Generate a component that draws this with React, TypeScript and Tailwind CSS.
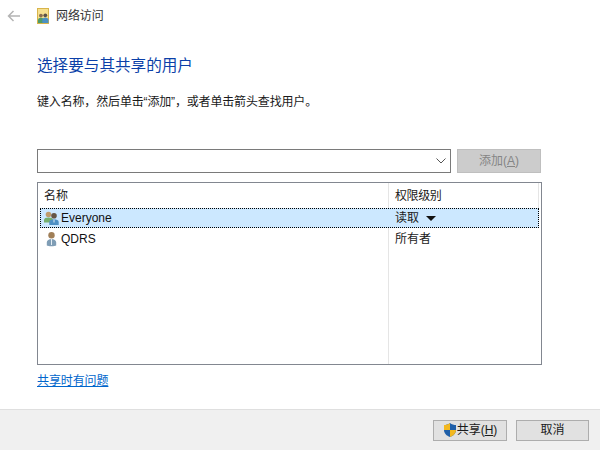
const font = { fontFamily: '"Liberation Sans", "Noto Sans CJK SC", sans-serif' };

function ShareIcon() {
  return (
    <svg width="12" height="16" viewBox="0 0 12 16" className="shrink-0">
      <rect x="0.5" y="0.5" width="11" height="15" fill="#f6e08f" stroke="#d8b44a" />
      <circle cx="3.900" cy="7.600" r="1.900" fill="#8a6d4f" />
      <path d="M1 15v-3c0-1.500 1.300-2.200 2.900-2.200S6.800 10.500 6.800 12v3z" fill="#4f9a68" />
      <circle cx="8.300" cy="7.300" r="1.900" fill="#5a5148" />
      <path d="M5.300 15v-3c0-1.500 1.300-2.400 3-2.400S11.500 10.500 11.500 12v3z" fill="#4b91c4" />
    </svg>
  );
}

function GroupIcon() {
  return (
    <svg width="17" height="16" viewBox="0 0 17 16" className="shrink-0">
      <circle cx="5.500" cy="4.500" r="2.800" fill="#c09c6c" />
      <path d="M1 12.500V10c0-1.900 2-2.600 4.500-2.600S10 8.100 10 10v2.500z" fill="#76b06e" />
      <circle cx="11" cy="5.800" r="2.800" fill="#655545" />
      <path d="M6.300 15v-3c0-2 2.100-2.800 4.700-2.800s4.700.8 4.700 2.800v3z" fill="#4d8fc4" />
      <path d="M11 9.500v3" stroke="#dbeaf5" />
    </svg>
  );
}

function UserIcon() {
  return (
    <svg width="13" height="16" viewBox="0 0 13 16" className="shrink-0">
      <circle cx="6.500" cy="4.200" r="3.200" fill="#a07f58" />
      <path d="M1.800 14.500v-3.300c0-2 2.200-3.300 4.700-3.300s4.700 1.300 4.700 3.300v3.300c-1.400.9-8 .9-9.400 0z" fill="#7f9db5" />
      <path d="M6.500 8v6" stroke="#e4edf3" />
    </svg>
  );
}

function Shield() {
  return (
    <svg width="14" height="16" viewBox="0 0 14 16" className="shrink-0">
      <path d="M7 1C5.200 2.400 3 3 1 3v5c0 3.300 2.600 5.800 6 7 3.400-1.200 6-3.700 6-7V3c-2 0-4.200-.6-6-2z" fill="#1f5fa8" />
      <path d="M7 1C5.200 2.400 3 3 1 3v5h6z" fill="#f3b81f" />
      <path d="M7 8v7c3.400-1.200 6-3.700 6-7z" fill="#f3b81f" />
    </svg>
  );
}

export default function App() {
  return (
    <div className="w-[600px] h-[450px] bg-white flex flex-col overflow-hidden text-[12px] text-[#1a1a1a]" style={font}>
      <div className="h-[31px] flex items-center shrink-0">
        <svg width="14" height="12" viewBox="0 0 14 12" className="ml-[7px] mr-[16px] shrink-0">
          <path d="M6.500 1 1.500 6l5 5M1.500 6H13" fill="none" stroke="#b4b4b4" strokeWidth="1.500" />
        </svg>
        <ShareIcon />
        <span className="ml-[7px] leading-[16px] text-[#333] tracking-[-0.1px]">网络访问</span>
      </div>

      <div className="flex-1 pl-[37px] pr-[58px] pt-[23px] flex flex-col">
        <h1 className="text-[15.6px] leading-[24px] text-[#0b3fa8] font-normal">选择要与其共享的用户</h1>
        <p className="mt-[16px] leading-[16px] tracking-[-0.16px]">键入名称，然后单击“添加”，或者单击箭头查找用户。</p>

        <div className="mt-[39px] flex items-center">
          <div className="w-[414px] h-[24px] border border-[#7a7a7a] flex items-center justify-end pr-[4px]">
            <svg width="10" height="6" viewBox="0 0 10 6">
              <path d="M.5.500 5 5 9.500.500" fill="none" stroke="#555" />
            </svg>
          </div>
          <div className="ml-[6px] w-[84px] h-[24px] bg-[#cccccc] border border-[#bfbfbf] flex items-center justify-center text-[#858585]">
            <span>添加(<span className="underline">A</span>)</span>
          </div>
        </div>

        <div className="mt-[9px] w-[505px] h-[183px] border border-[#828790] flex flex-col">
          <div className="h-[25px] flex items-center shrink-0">
            <span className="w-[350px] pl-[6px]">名称</span>
            <span className="h-full w-px bg-[#e5e5e5]" />
            <span className="pl-[6px] flex-1 tracking-[-0.4px]">权限级别</span>
            <span className="h-full w-px bg-[#e5e5e5] mr-[2px]" />
          </div>
          <div className="h-[20px] flex items-center mx-[2px] bg-[#cce8ff] border border-dotted border-black shrink-0">
            <div className="w-[347px] flex items-center pl-[2px] gap-[1px]">
              <GroupIcon />
              <span className="text-[#111]">Everyone</span>
            </div>
            <span className="w-px" />
            <span className="pl-[6px]">读取</span>
            <svg width="10" height="5" viewBox="0 0 10 5" className="ml-[7px]">
              <path d="M0 0h10L5 5z" fill="#111" />
            </svg>
          </div>
          <div className="flex-1 flex min-h-0">
            <div className="w-[350px] pl-[7px] pt-[1px] h-[21px] flex items-center gap-[3px]">
              <UserIcon />
              <span className="text-[#111]">QDRS</span>
            </div>
            <div className="w-px bg-[#e5e5e5]" />
            <span className="pl-[6px] pt-[1px] h-[21px] flex items-center">所有者</span>
          </div>
        </div>

        <a className="mt-[7px] leading-[18px] text-[#0066cc] underline w-fit tracking-[-0.1px]">共享时有问题</a>
      </div>

      <div className="h-[41px] shrink-0 bg-[#f0f0f0] border-t border-[#dfdfdf] flex items-center justify-end pr-[11px] gap-[9px]">
        <div className="w-[74px] h-[21px] bg-[#e1e1e1] border border-[#adadad] flex items-center justify-center">
          <Shield />
          <span>共享(<span className="underline">H</span>)</span>
        </div>
        <div className="w-[73px] h-[21px] bg-[#e1e1e1] border border-[#adadad] flex items-center justify-center">取消</div>
      </div>
    </div>
  );
}
